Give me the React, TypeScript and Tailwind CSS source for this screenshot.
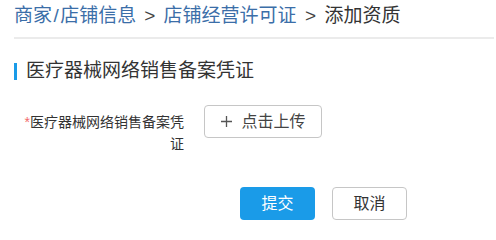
import React from 'react';

const FONT = "font-['Liberation_Sans','Noto_Sans_CJK_SC',sans-serif]";

export default function App() {
  return (
    <div className={`h-[234px] w-[496px] overflow-hidden bg-white pl-[14px] pr-[2px] ${FONT}`}>
      {/* breadcrumb */}
      <div className="flex h-[39px] items-start border-b-2 border-[#ebebeb] pt-[3px] text-[19px] leading-[26px]">
        <span className="text-[#3b6ea8]">
          商家<span className="px-[1.5px]">/</span>店铺信息
        </span>
        <span className="px-[8px] text-[#444]">&gt;</span>
        <span className="text-[#3b6ea8]">店铺经营许可证</span>
        <span className="px-[8.5px] text-[#444]">&gt;</span>
        <span className="text-[#333]">添加资质</span>
      </div>

      {/* section title */}
      <div className="mt-[20px] flex h-[24px] items-center">
        <div className="h-[17px] w-[3px] bg-[#1a9be8]" />
        <div className="ml-[9px] text-[19px] leading-[24px] text-[#333]">
          医疗器械网络销售备案凭证
        </div>
      </div>

      {/* form row */}
      <div className="mt-[22px] flex items-start">
        <div className="w-[170px] pt-[6px] text-right text-[14px] leading-[22px] text-[#333]">
          <span className="text-[#f26b6b]">*</span>
          医疗器械网络销售备案凭证
        </div>
        <button className="ml-[20px] flex h-[33px] w-[118px] items-center justify-center rounded-[4px] border border-[#c6c6c6] bg-white text-[16px] text-[#444]">
          <svg width="13" height="13" viewBox="0 0 13 13" className="mr-[8px]">
            <path d="M6.5 1v11M1 6.5h11" stroke="#555" strokeWidth="1.3" />
          </svg>
          点击上传
        </button>
      </div>

      {/* actions */}
      <div className="ml-[226px] mt-[32px] flex items-center gap-[17px]">
        <button className="h-[33px] w-[75px] rounded-[4px] bg-[#1a9be8] text-[16px] text-white">
          提交
        </button>
        <button className="h-[33px] w-[75px] rounded-[4px] border border-[#c6c6c6] bg-white text-[16px] text-[#333]">
          取消
        </button>
      </div>
    </div>
  );
}
